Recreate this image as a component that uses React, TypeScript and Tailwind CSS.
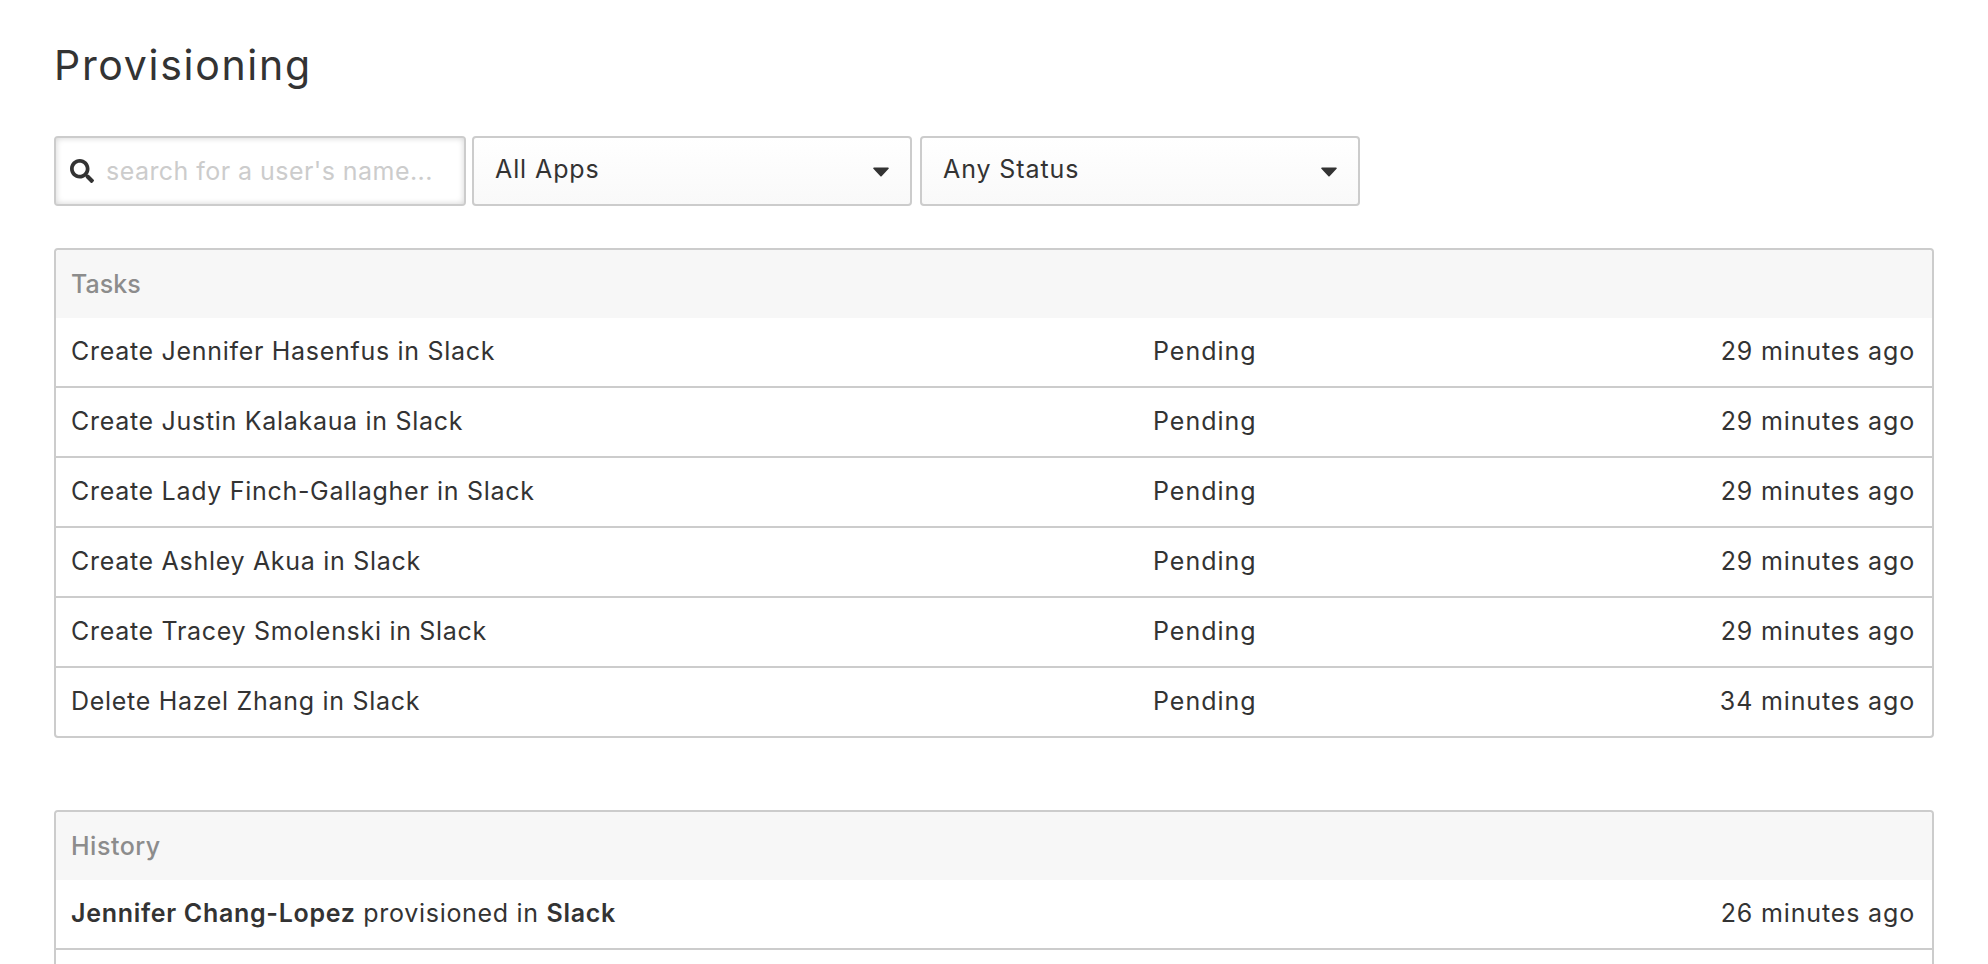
// App.tsx
import React from "react";
import { FaSearch } from "react-icons/fa";

const tasks = [
  { name: "Create Jennifer Hasenfus in Slack", time: "29 minutes ago" },
  { name: "Create Justin Kalakaua in Slack", time: "29 minutes ago" },
  { name: "Create Lady Finch-Gallagher in Slack", time: "29 minutes ago" },
  { name: "Create Ashley Akua in Slack", time: "29 minutes ago" },
  { name: "Create Tracey Smolenski in Slack", time: "29 minutes ago" },
  { name: "Delete Hazel Zhang in Slack", time: "34 minutes ago" },
];

const Select: React.FC<{ label: string }> = ({ label }) => {
  return (
    <div className="flex h-[70px] w-[440px] items-center justify-between rounded-[4px] border-2 border-[#cccccc] bg-gradient-to-b from-white to-[#f9f9f9] pl-[21px] pr-[21px]">
      <span className="pb-[3px] tracking-[0.9px] text-[#333333]">{label}</span>
      <svg width="16" height="10" viewBox="0 0 16 10" className="mt-[2px]">
        <path d="M1 0.5h14c.8 0 1 .8.6 1.3L8.6 9.3c-.4.4-.9.4-1.2 0L.4 1.8C0 1.3.2.5 1 .5z" fill="#333333" />
      </svg>
    </div>
  );
};

const App: React.FC = () => {
  return (
    <div className="h-[964px] overflow-hidden bg-white px-[54px] pt-[36px] font-['Inter',sans-serif] text-[25px] tracking-[0.7px] text-[#333333]">
      <h1 className="h-[64px] text-[41px] leading-[58px] tracking-[1.7px]">Provisioning</h1>

      {/* Filters */}
      <div className="mt-[36px] flex">
        <div className="flex h-[70px] w-[412px] items-center rounded-[4px] border-2 border-[#cccccc] bg-white pl-[14px] shadow-[inset_0_0_6px_rgba(0,0,0,0.18)]">
          <FaSearch className="h-[24px] w-[24px] text-[#333333]" />
          <span className="ml-[12px] whitespace-nowrap pt-[2px] tracking-[0.45px] text-[#cccccc]">search for a user's name...</span>
        </div>
        <div className="ml-[6px]">
          <Select label="All Apps" />
        </div>
        <div className="ml-[8px]">
          <Select label="Any Status" />
        </div>
      </div>

      {/* Tasks */}
      <div className="mt-[42px] rounded-[4px] border-2 border-[#cccccc]">
        <div className="flex h-[68px] items-center rounded-t-[4px] bg-[#f7f7f7] px-[15px] pt-[2px] font-medium tracking-normal text-[#8c8c8c]">Tasks</div>
        {tasks.map((task, i) => (
          <div
            key={task.name}
            className={i > 0
              ? "flex h-[70px] items-center border-t-2 border-[#cccccc] pl-[15px] pr-[17px]"
              : "flex h-[68px] items-center pl-[15px] pr-[17px]"}
          >
            <span className="w-[1082px]">{task.name}</span>
            <span className="tracking-[1px]">Pending</span>
            <span className="ml-auto tracking-[0.85px]">{task.time}</span>
          </div>
        ))}
      </div>

      {/* History */}
      <div className="mt-[72px] rounded-[4px] border-2 border-[#cccccc]">
        <div className="flex h-[68px] items-center rounded-t-[4px] bg-[#f7f7f7] px-[15px] pt-[2px] font-medium tracking-[0.5px] text-[#8c8c8c]">History</div>
        <div className="flex h-[68px] items-center pl-[15px] pr-[17px]">
          <span>
            <b className="font-semibold">Jennifer Chang-Lopez</b> provisioned in <b className="font-semibold">Slack</b>
          </span>
          <span className="ml-auto tracking-[0.85px]">26 minutes ago</span>
        </div>
        <div className="h-[70px] border-t-2 border-[#cccccc]" />
      </div>
    </div>
  );
};

export default App;
